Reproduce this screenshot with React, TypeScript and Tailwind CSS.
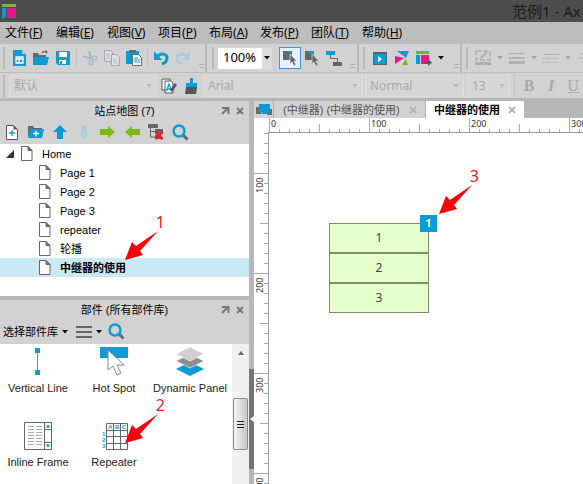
import { useEffect, useState } from "react";
import type { ReactNode } from "react";

const BLUE = "#0b9bd6";

function Ico({ w = 16, h = 16, children }: { w?: number; h?: number; children: ReactNode }) {
  return (
    <svg width={w} height={h} viewBox={`0 0 ${w} ${h}`} fill="none" aria-hidden="true" className="shrink-0">
      {children}
    </svg>
  );
}

function Tool({ label, className = "w-[22px]", children }: { label: string; className?: string; children: ReactNode }) {
  return (
    <button type="button" aria-label={label} className={`flex h-[22px] shrink-0 items-center justify-center ${className}`}>
      {children}
    </button>
  );
}

function Handle() {
  return <span className="h-[22px] w-[2px] shrink-0 bg-[#b9b9b9]" />;
}

function Sep() {
  return (
    <span className="flex w-[5px] shrink-0 justify-center">
      <span className="h-[22px] w-px bg-[#c3c3c3]" />
    </span>
  );
}

function Overflow() {
  return (
    <span className="flex w-[7px] shrink-0 flex-col items-center gap-[2px] self-end pb-1">
      <span className="h-px w-[5px] bg-[#b0b0b0]" />
      <span className="h-px w-[3px] bg-[#b0b0b0]" />
    </span>
  );
}

function Divider() {
  return <span className="h-full w-[2px] shrink-0 bg-[#b9b9b9]" />;
}

function Caret({ color = "#111" }: { color?: string }) {
  return (
    <Ico w={6} h={4}>
      <path d="M0 0h6L3 3.5z" fill={color} />
    </Ico>
  );
}

function GhostSelect({ label, value, className }: { label: string; value: string; className: string }) {
  return (
    <span className={`relative flex h-[22px] shrink-0 items-center border border-[#dedede] bg-[#d6d6d6] ${className}`}>
      <select aria-label={label} disabled className="h-full w-full appearance-none bg-transparent pl-1 text-xs text-[#a9a9a9] opacity-100">
        <option>{value}</option>
      </select>
      <span className="pointer-events-none absolute right-1">
        <Caret color="#bababa" />
      </span>
    </span>
  );
}

function PageIcon() {
  return (
    <Ico w={12} h={15}>
      <path d="M.5.5h6.5l4 4v10H.5z" fill="#fff" stroke="#666" />
      <path d="M7 .5v4h4z" fill="#777" stroke="#666" />
    </Ico>
  );
}

function SearchIcon() {
  return (
    <Ico w={17} h={17}>
      <path d="M11 11l4.5 4.5" stroke="#666" strokeWidth="3" />
      <circle cx="7" cy="7" r="5.5" stroke={BLUE} strokeWidth="2.4" />
    </Ico>
  );
}

function CloseIcon({ color = "#777" }: { color?: string }) {
  return (
    <Ico w={8} h={8}>
      <path d="M1 1l6 6M7 1L1 7" stroke={color} strokeWidth="2" />
    </Ico>
  );
}

function PanelTitle({ title }: { title: string }) {
  return (
    <header className="flex h-[19px] shrink-0 items-center justify-end px-1">
      <h2 className="flex-1 pl-6 text-center">{title}</h2>
      <button type="button" aria-label="Undock" className="mr-[6px]">
        <Ico w={9} h={9}>
          <path d="M1 8l5.5-5.5M1 2h6.500V8" stroke="#777" strokeWidth="2" />
        </Ico>
      </button>
      <button type="button" aria-label="Close" className="mr-px">
        <CloseIcon />
      </button>
    </header>
  );
}

const MENUS = [
  ["文件", "F"],
  ["编辑", "E"],
  ["视图", "V"],
  ["项目", "P"],
  ["布局", "A"],
  ["发布", "P"],
  ["团队", "T"],
  ["帮助", "H"],
];

function MenuBar() {
  return (
    <nav className="flex h-[22px] shrink-0 items-center bg-[#bdbdbd] pl-[5px] text-xs text-black">
      {MENUS.map(([name, key]) => (
        <button key={name} type="button" className="w-[51px] shrink-0 text-left whitespace-nowrap">
          {name}(<u>{key}</u>)
        </button>
      ))}
    </nav>
  );
}

function MainToolbar() {
  return (
    <div className="flex h-7 shrink-0 items-center overflow-hidden bg-[#d2d2d2] pl-[3px]">
      <Handle />
      <span className="w-[3px] shrink-0" />
      <Tool label="New">
        <Ico>
          <path d="M2 0h9l4 4v12H2z" fill={BLUE} />
          <path d="M11 0v4h4z" fill="#9bd3ea" />
          <path d="M5 7h7v6H5zM5 9h7M8 9v4" stroke="#fff" strokeWidth="1.300" />
        </Ico>
      </Tool>
      <Tool label="Open">
        <Ico>
          <path d="M0 3h5l1 2h7v3H0z" fill="#666" />
          <path d="M9 3q2-2.500 4-1" stroke="#666" strokeWidth="1.300" />
          <path d="M12 0l3 2-2 2z" fill="#666" />
          <path d="M2 7h14l-2 8H0V8z" fill={BLUE} />
        </Ico>
      </Tool>
      <Tool label="Save">
        <Ico>
          <path d="M1 1h14v14H3l-2-2z" fill={BLUE} />
          <path d="M4 2h8v5H4zM4 10h7v4H4z" fill="#fff" />
          <path d="M5 11h2v3H5z" fill={BLUE} />
        </Ico>
      </Tool>
      <Sep />
      <Tool label="Cut">
        <Ico>
          <path d="M1 6l9 3M7 1l2 8" stroke="#b0b0b0" strokeWidth="1.800" />
          <circle cx="12.500" cy="8" r="2" stroke="#9fc3d2" strokeWidth="1.500" />
          <circle cx="9" cy="12.500" r="2" stroke="#9fc3d2" strokeWidth="1.500" />
        </Ico>
      </Tool>
      <Tool label="Copy">
        <Ico>
          <path d="M.5.5h6l2 2v9h-8z" fill="#dcdcdc" stroke="#a9a9a9" />
          <path d="M7.500 4.500h5l3 3v8h-8z" fill="#e2e2e2" stroke="#a9a9a9" />
          <path d="M2 4h4M2 6h4M2 8h4M9 9h4M9 11h5M9 13h5" stroke="#b5c8d0" />
        </Ico>
      </Tool>
      <Tool label="Paste">
        <Ico>
          <path d="M0 1h13v13H0z" fill={BLUE} />
          <path d="M3 0h7v3H3z" fill="#666" />
          <path d="M6.500 4.500h6l3 3v8h-9z" fill="#fff" stroke="#666" />
          <path d="M8 8h4M8 10h6M8 12h6" stroke={BLUE} />
        </Ico>
      </Tool>
      <Sep />
      <Tool label="Undo">
        <Ico>
          <path d="M4 7c4-5 10-3 10 1 0 3-2 5-5 6" stroke={BLUE} strokeWidth="3" />
          <path d="M1 1v9h8z" fill={BLUE} />
        </Ico>
      </Tool>
      <Tool label="Redo">
        <Ico>
          <path d="M12 7C8 2 2 4 2 8c0 3 2 5 5 6" stroke="#a9cddb" strokeWidth="2.800" />
          <path d="M15 1v9H7z" fill="#a9cddb" />
        </Ico>
      </Tool>
      <span className="w-1 shrink-0" />
      <Overflow />
      <Divider />
      <span className="w-[5px] shrink-0" />
      <Handle />
      <span className="relative ml-1 flex h-[21px] w-[54px] shrink-0 items-center bg-white">
        <select aria-label="Zoom" className="h-full w-full appearance-none bg-transparent pl-[5px] text-[13px] text-black">
          <option>100%</option>
        </select>
        <span className="pointer-events-none absolute right-0 flex h-full w-[10px] items-center justify-center bg-[#dcdcdc]">
          <Caret />
        </span>
      </span>
      <span className="w-[7px] shrink-0" />
      <Tool label="Select intersected" className="w-[22px] border border-[#4a90d9] bg-[#e6f0fa]">
        <Ico>
          <path d="M1 1h9v9H1z" fill="#666" />
          <path d="M5 1h5v4z" fill={BLUE} />
          <path d="M8 4v10l2-2 2 4 2-1-2-4h3z" fill="#666" stroke="#e6f0fa" strokeWidth=".7" />
        </Ico>
      </Tool>
      <Tool label="Select contained">
        <Ico>
          <path d="M1 1h9v9H1z" fill="#666" />
          <path d="M2 1h8v5z" fill={BLUE} />
          <path d="M8 4v10l2-2 2 4 2-1-2-4h3z" fill="#666" stroke="#d2d2d2" strokeWidth=".7" />
        </Ico>
      </Tool>
      <Tool label="Connector">
        <Ico>
          <path d="M0 1h9v4H0z" fill={BLUE} />
          <path d="M7 12h9v4H7z" fill="#666" />
          <path d="M4.500 5v3.500h7V12" stroke="#666" />
        </Ico>
      </Tool>
      <span className="w-1 shrink-0" />
      <Overflow />
      <span className="w-px shrink-0" />
      <Divider />
      <span className="w-1 shrink-0" />
      <Handle />
      <span className="w-1 shrink-0" />
      <Tool label="Preview">
        <Ico w={14} h={13}>
          <path d="M0 0h14v13H0z" fill="#4f6672" />
          <path d="M1 2h12v10H1z" fill={BLUE} />
          <path d="M5 4l4 3-4 3.500z" fill="#fff" />
        </Ico>
      </Tool>
      <Tool label="Share">
        <Ico>
          <path d="M3 1h12l-3 7z" fill={BLUE} />
          <path d="M1 6l9 2-9 6z" fill="#f0148c" />
          <path d="M8 15h6l-2-6z" fill="#6fba1e" />
        </Ico>
      </Tool>
      <Tool label="Publish">
        <Ico>
          <path d="M0 1h13v3H0z" fill="#6fba1e" />
          <path d="M0 5h4v9H0z" fill={BLUE} />
          <path d="M5 5h8v9H5z" fill="#f0148c" />
          <path d="M9 11h3V9l4 3.500-4 3.500v-2H9z" fill="#555" />
        </Ico>
      </Tool>
      <span className="flex w-3 shrink-0 justify-center">
        <Caret />
      </span>
      <span className="w-[6px] shrink-0" />
      <Overflow />
      <Divider />
      <span className="w-1 shrink-0" />
      <Handle />
      <span className="w-1 shrink-0" />
      <Tool label="Line color">
        <Ico>
          <path d="M1 1h14v9H1z" stroke="#b0b0b0" strokeWidth="1.500" strokeDasharray="5 2" />
          <path d="M5 9l7-7" stroke="#b0b0b0" strokeWidth="2" />
          <path d="M0 12h16v3H0z" fill="#b0b0b0" />
        </Ico>
      </Tool>
      <span className="flex w-3 shrink-0 justify-center">
        <Caret color="#a5a5a5" />
      </span>
      <Tool label="Line width">
        <Ico>
          <path d="M0 3.500h16" stroke="#b0b0b0" />
          <path d="M0 8h16" stroke="#b0b0b0" strokeWidth="2" />
          <path d="M0 12.500h16" stroke="#b0b0b0" strokeWidth="3" />
        </Ico>
      </Tool>
      <span className="flex w-3 shrink-0 justify-center">
        <Caret color="#a5a5a5" />
      </span>
      <Tool label="Line style">
        <Ico>
          <path d="M0 4.500h16" stroke="#b0b0b0" />
          <path d="M0 8.500h16" stroke="#b0b0b0" strokeDasharray="2 1" />
          <path d="M0 12.500h16" stroke="#b0b0b0" strokeDasharray="1 1" />
        </Ico>
      </Tool>
      <span className="flex w-3 shrink-0 justify-center">
        <Caret color="#a5a5a5" />
      </span>
      <Tool label="Arrow style">
        <Ico>
          <path d="M4 4h12M1 8h12M4 12h12" stroke="#b0b0b0" />
        </Ico>
      </Tool>
    </div>
  );
}

function FormatToolbar() {
  return (
    <div className="flex h-[26px] shrink-0 items-center overflow-hidden border-t border-[#bcbcbc] bg-[#d2d2d2] pl-[3px]">
      <Handle />
      <GhostSelect label="Widget style" value="默认" className="ml-1 w-[148px]" />
      <span className="w-px shrink-0" />
      <Tool label="Style editor">
        <Ico>
          <path d="M1 1h8v11H1z" fill="#fff" stroke="#555" />
          <path d="M4 3h6l2 2v10H4z" fill="#fff" stroke="#555" />
          <path d="M5.500 13L8 6l2.500 7M6.500 11h3" stroke={BLUE} strokeWidth="1.300" />
          <path d="M9 12l5-7 2 2-5 7z" fill="#555" />
        </Ico>
      </Tool>
      <Tool label="Format painter">
        <Ico>
          <path d="M7 0h3v6H7z" fill={BLUE} />
          <path d="M3 5h11v4H3z" fill={BLUE} />
          <path d="M3 9h11l-1 7H2z" fill="#555" />
        </Ico>
      </Tool>
      <GhostSelect label="Font" value="Arial" className="ml-[1px] w-[160px]" />
      <GhostSelect label="Typeface" value="Normal" className="ml-[2px] w-[99px]" />
      <GhostSelect label="Size" value="13" className="ml-[3px] w-[43px]" />
      <span className="ml-1 h-[22px] w-px shrink-0 bg-[#c3c3c3]" />
      <span className="ml-[3px] flex shrink-0 font-['Liberation_Serif',serif] text-base text-[#a9a9a9]">
        <button type="button" className="w-[22px] font-bold">B</button>
        <button type="button" className="w-[22px] font-bold italic">I</button>
        <button type="button" className="w-[22px] underline">U</button>
      </span>
    </div>
  );
}

function ArrowMark({ n }: { n: number }) {
  return (
    <span className="pointer-events-none flex w-[42px] flex-col items-end font-['Noto_Sans',sans-serif] text-base text-[#dc2430]">
      <span className="pr-[2px] leading-[18px]">{n}</span>
      <span className="pr-2">
        <Ico w={34} h={30}>
          <path d="M0 29L7 11l4 4L33 0 15 20l3 4z" fill="#fb0007" />
        </Ico>
      </span>
    </span>
  );
}

const PAGES = ["Page 1", "Page 2", "Page 3", "repeater", "轮播"];

function SiteMap() {
  return (
    <section className="relative flex h-[195px] shrink-0 flex-col bg-[#d2d2d2]">
      <PanelTitle title="站点地图 (7)" />
      <div className="flex h-6 shrink-0 items-center">
        <Tool label="Add page" className="w-6">
          <Ico w={12} h={15}>
            <path d="M.5.5h7l4 4v10H.5z" fill="#fff" stroke="#555" />
            <path d="M7.500.5v4h4z" fill="#555" />
            <path d="M6 5v6M3 8h6" stroke={BLUE} strokeWidth="1.300" />
          </Ico>
        </Tool>
        <Tool label="Add folder" className="w-6">
          <Ico>
            <path d="M0 2h5l1 2h8v8H0z" fill="#5b6b73" />
            <path d="M2 5h14l-2 9H0z" fill={BLUE} />
            <path d="M8 6.500v6M5 9.500h6" stroke="#fff" strokeWidth="1.300" />
          </Ico>
        </Tool>
        <Tool label="Move up" className="w-6">
          <Ico>
            <path d="M8 1l7 7h-4v7H5V8H1z" fill={BLUE} />
          </Ico>
        </Tool>
        <Tool label="Move down" className="w-6">
          <Ico>
            <path d="M8 15L2 9h3V1h6v8h3z" fill="#b3d0da" />
          </Ico>
        </Tool>
        <Tool label="Indent" className="w-6">
          <Ico>
            <path d="M0 5h8V2l7 6-7 6v-3H0z" fill="#78ba0e" />
          </Ico>
        </Tool>
        <Tool label="Outdent" className="w-6">
          <Ico>
            <path d="M16 5H8V2L1 8l7 6v-3h8z" fill="#78ba0e" />
          </Ico>
        </Tool>
        <Tool label="Delete" className="w-6">
          <Ico>
            <path d="M0 0h10v4H0zM7 5h8v4H7zM7 11h6v4H7z" fill="#666" />
            <path d="M2.500 4v9H7M2.500 7.500H7" stroke="#666" />
            <path d="M7.500 8l7 7M14.500 8l-7 7" stroke="#df1f2b" strokeWidth="2.600" />
          </Ico>
        </Tool>
        <Tool label="Search" className="w-6">
          <SearchIcon />
        </Tool>
      </div>
      <ul className="flex-1 bg-white text-black">
        <li className="flex h-[19px] items-center pl-[6px]">
          <Ico w={8} h={8}>
            <path d="M8 0v8H0z" fill="#333" />
          </Ico>
          <span className="ml-[7px] flex items-center gap-[9px]">
            <PageIcon />
            Home
          </span>
        </li>
        {PAGES.map((p) => (
          <li key={p} className="flex h-[19px] items-center gap-[9px] pl-[39px]">
            <PageIcon />
            {p}
          </li>
        ))}
        <li className="flex h-[19px] items-center gap-[9px] bg-[#cbe8f5] pl-[39px] font-bold">
          <PageIcon />
          中继器的使用
        </li>
      </ul>
      <div className="absolute top-[112px] left-[125px]">
        <ArrowMark n={1} />
      </div>
    </section>
  );
}

function Widget({ name, children }: { name: string; children?: ReactNode }) {
  return (
    <figure className="flex flex-col items-center text-[#222]">
      <div className="flex h-9 items-center">{children}</div>
      <figcaption className="h-4 leading-4 whitespace-nowrap">{name}</figcaption>
    </figure>
  );
}

function Widgets() {
  return (
    <section className="relative flex min-h-0 flex-1 flex-col bg-[#d2d2d2]">
      <PanelTitle title="部件 (所有部件库)" />
      <div className="flex h-[25px] shrink-0 items-center pl-[3px] text-black">
        <button type="button" className="flex items-center gap-1">
          选择部件库
          <Caret />
        </button>
        <button type="button" aria-label="Library options" className="ml-2 flex items-center gap-1">
          <Ico>
            <path d="M0 3h16M0 8h16M0 13h16" stroke="#666" strokeWidth="2" />
          </Ico>
          <Caret />
        </button>
        <button type="button" aria-label="Search widgets" className="ml-[6px]">
          <SearchIcon />
        </button>
      </div>
      <div className="flex min-h-0 flex-1 bg-white">
        <div className="grid flex-1 grid-cols-3 content-start gap-y-[22px] pr-1">
          <Widget name="Vertical Line">
            <Ico w={6} h={30}>
              <path d="M2.500 2v25" stroke="#888" />
              <path d="M0 1h5v5H0zM0 23h5v5H0z" fill={BLUE} />
            </Ico>
          </Widget>
          <Widget name="Hot Spot">
            <Ico w={28} h={32}>
              <path d="M0 1h28v11H0z" fill={BLUE} />
              <path d="M8 4v20l5-4 4 9 4-2-4-8h7z" fill="#fff" stroke="#888" />
            </Ico>
          </Widget>
          <Widget name="Dynamic Panel">
            <Ico w={28} h={30}>
              <path d="M0 22l14-7 14 7-14 7z" fill={BLUE} />
              <path d="M0 14l14-7 14 7-14 7z" fill="#8e8e8e" stroke="#fff" strokeWidth=".6" />
              <path d="M0 7l14-7 14 7-14 7z" fill="#cfcfcf" stroke="#fff" strokeWidth=".6" />
            </Ico>
          </Widget>
          <Widget name="Inline Frame">
            <Ico w={28} h={28}>
              <path d="M.5.5h27v27H.5zM20.500.5v27M20.500 7.500h7M20.500 20.500h7" stroke="#666" />
              <path d="M4 4.500h14M4 7.500h14M4 10.500h14M4 13.500h14M4 16.500h14M4 19.500h14M4 22.500h14" stroke="#aaa" strokeDasharray="6 2" />
              <path d="M24 2.500l2.500 3h-5zM24 25.500l2.500-3h-5z" fill={BLUE} />
            </Ico>
          </Widget>
          <Widget name="Repeater">
            <Ico w={27} h={27}>
              <path d="M5.500.5h21v26h-21zM12.500.5v26M19.500.5v26M5.500 7.500h21M5.500 13.500h21M5.500 20.500h21" stroke="#666" />
              <g fill={BLUE} fontFamily="Liberation Sans" fontSize="6" fontWeight="bold">
                <text x="7" y="6">A</text>
                <text x="14" y="6">B</text>
                <text x="21" y="6">C</text>
                <text x="1" y="13">1</text>
                <text x="1" y="19">2</text>
                <text x="1" y="25">3</text>
              </g>
            </Ico>
          </Widget>
        </div>
        <div className="flex w-[17px] shrink-0 flex-col items-center bg-[#f0f0f0]">
          <span className="flex h-[17px] items-center">
            <Ico w={6} h={4}>
              <path d="M0 4h6L3 0z" fill="#666" />
            </Ico>
          </span>
          <span className="mt-[37px] flex h-[52px] w-[15px] flex-col items-center justify-center gap-[2px] rounded-[2px] border border-[#8c8c8c] bg-linear-to-r from-[#f4f4f4] to-[#c6c6c6]">
            <span className="h-px w-[7px] bg-[#222]" />
            <span className="h-px w-[7px] bg-[#222]" />
            <span className="h-px w-[7px] bg-[#222]" />
          </span>
        </div>
      </div>
      <div className="absolute top-[96px] left-[125px]">
        <ArrowMark n={2} />
      </div>
    </section>
  );
}

function useWindowSize() {
  const [size, setSize] = useState({ w: window.innerWidth, h: window.innerHeight });
  useEffect(() => {
    const update = () => setSize({ w: window.innerWidth, h: window.innerHeight });
    window.addEventListener("resize", update);
    return () => window.removeEventListener("resize", update);
  }, []);
  return size;
}

function HRuler() {
  const { w } = useWindowSize();
  const marks = Array.from({ length: Math.max(0, Math.ceil((w - 269) / 10)) }, (_, i) => i * 10);
  return (
    <svg className="h-[15px] w-full" aria-hidden="true">
      {marks.map((m) => (
        <path key={m} d={`M${m + 15.5} ${m % 100 === 0 ? 0 : m % 50 === 0 ? 6 : 11}V14`} stroke="#aaa" />
      ))}
      <path d="M14 14.500H3000" stroke="#999" />
      {marks.filter((m) => m % 100 === 0).map((m) => (
        <text key={m} x={m + 17} y="9" fontSize="9" fill="#333" fontFamily="Noto Sans">
          {m}
        </text>
      ))}
    </svg>
  );
}

function VRuler() {
  const { h } = useWindowSize();
  const marks = Array.from({ length: Math.max(0, Math.ceil((h - 133) / 10)) }, (_, i) => 60 + i * 10);
  return (
    <svg className="h-full w-[15px] shrink-0" aria-hidden="true">
      {marks.map((m) => (
        <path key={m} d={`M${m % 100 === 0 ? 0 : m % 50 === 0 ? 6 : 10} ${m - 59.5}H14`} stroke="#aaa" />
      ))}
      <path d="M14.500 0V3000" stroke="#999" />
      {marks.filter((m) => m % 100 === 0).map((m) => (
        <text key={m} transform={`translate(9 ${m - 40}) rotate(-90)`} fontSize="9" fill="#333" fontFamily="Noto Sans">
          {m}
        </text>
      ))}
    </svg>
  );
}

function Editor() {
  return (
    <main className="flex min-w-0 flex-1 flex-col bg-white">
      <div role="tablist" className="flex h-[17px] shrink-0 overflow-hidden bg-[#b7b7b7]">
        <button type="button" aria-label="Views" className="flex w-5 shrink-0 items-center justify-center border-r border-[#b0b0b0] bg-[#d2d2d2]">
          <Ico w={16} h={11}>
            <path d="M0 3h5v7H0zM11 5h5v6h-5z" fill="#5f6d75" />
            <path d="M3 0h11v8h-3l1 2H5l1-2H3z" fill={BLUE} />
          </Ico>
        </button>
        <div className="flex w-[152px] shrink-0 items-center justify-between border-r border-[#b0b0b0] bg-[#d2d2d2] pr-2 pl-[9px] text-[#555]">
          <button type="button" role="tab" aria-selected="false" className="whitespace-nowrap">
            (中继器) (中继器的使用)
          </button>
          <button type="button" aria-label="Close tab">
            <CloseIcon color="#b5b5b5" />
          </button>
        </div>
        <div className="flex w-[98px] shrink-0 items-center justify-between bg-white pr-2 pl-2 font-bold text-black">
          <button type="button" role="tab" aria-selected="true" className="whitespace-nowrap">
            中继器的使用
          </button>
          <button type="button" aria-label="Close active tab">
            <CloseIcon color="#b5b5b5" />
          </button>
        </div>
      </div>
      <HRuler />
      <div className="flex min-h-0 flex-1">
        <VRuler />
        <div className="relative flex-1 overflow-hidden">
          <div className="absolute top-[90px] left-[60px] w-[100px] font-['Noto_Sans',sans-serif] text-xs text-[#444]">
            {[1, 2, 3].map((n) => (
              <div key={n} className="flex h-[30px] items-center justify-center border border-[#7c9068] bg-[#e4ffcb]">
                {n}
              </div>
            ))}
            <span className="absolute -top-2 -right-2 flex size-[17px] items-center justify-center bg-[#0b9bd6] text-[11px] font-bold text-white">
              1
            </span>
          </div>
          <div className="absolute top-[34px] left-[170px]">
            <ArrowMark n={3} />
          </div>
        </div>
      </div>
    </main>
  );
}

export default function App() {
  return (
    <div className="flex h-screen w-full flex-col overflow-hidden bg-[#b7b7b7] font-['Noto_Sans','Noto_Sans_CJK_SC',sans-serif]">
      <header className="flex h-[22px] shrink-0 items-center justify-between overflow-hidden bg-[#4d4d4d] pl-[2px]">
        <Ico w={14} h={16}>
          <path d="M0 1h14v3H0z" fill="#7fb23c" />
          <path d="M0 5h4v9l-4 2z" fill={BLUE} />
          <path d="M5 5h9v10H5z" fill="#f0148c" />
        </Ico>
        <h1 className="w-[71px] text-[15px] leading-[22px] whitespace-nowrap text-[#1c1c1c]">范例1 - Ax</h1>
      </header>
      <MenuBar />
      <MainToolbar />
      <FormatToolbar />
      <div className="mt-[3px] flex min-h-0 flex-1 font-['Liberation_Sans','Noto_Sans_CJK_SC',sans-serif] text-[11px] leading-4">
        <aside className="flex w-[249px] shrink-0 flex-col gap-1">
          <SiteMap />
          <Widgets />
        </aside>
        <div className="w-[5px] shrink-0">
          <button type="button" aria-label="Collapse panels" className="mt-[268px] flex h-[100px] w-[5px] items-center justify-center bg-[#757575]">
            <Ico w={4} h={6}>
              <path d="M4 0v6L0 3z" fill="#fff" />
            </Ico>
          </button>
        </div>
        <Editor />
      </div>
    </div>
  );
}
